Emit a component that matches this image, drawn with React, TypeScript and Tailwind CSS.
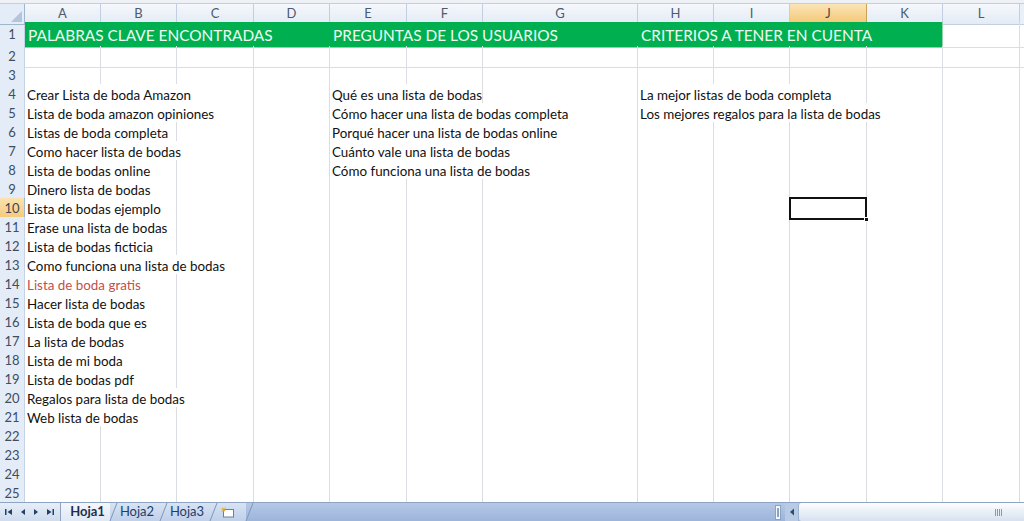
import React from "react";

const GRID =
  "grid grid-cols-[25px_76px_76px_77px_76px_77px_76px_155px_76px_76px_77px_76px_77px_1fr]";

const COLS = ["A", "B", "C", "D", "E", "F", "G", "H", "I", "J", "K", "L"];

type Seg = { span: number; text?: string; red?: boolean };

const SPAN: Record<number, string> = {
  1: "col-span-1",
  2: "col-span-2",
  3: "col-span-3",
  4: "col-span-4",
};

const colA: [string, number, boolean?][] = [
  ["Crear Lista de boda Amazon", 3],
  ["Lista de boda amazon opiniones", 3],
  ["Listas de boda completa", 2],
  ["Como hacer lista de bodas", 3],
  ["Lista de bodas online", 2],
  ["Dinero lista de bodas", 2],
  ["Lista de bodas ejemplo", 2],
  ["Erase una lista de bodas", 2],
  ["Lista de bodas ficticia", 2],
  ["Como funciona una lista de bodas", 3],
  ["Lista de boda gratis", 2, true],
  ["Hacer lista de bodas", 2],
  ["Lista de boda que es", 2],
  ["La lista de bodas", 2],
  ["Lista de mi boda", 2],
  ["Lista de bodas pdf", 2],
  ["Regalos para lista de bodas", 3],
  ["Web lista de bodas", 2],
];

const colE: [string, number][] = [
  ["Qué es una lista de bodas", 2],
  ["Cómo hacer una lista de bodas completa", 3],
  ["Porqué hacer una lista de bodas online", 3],
  ["Cuánto vale una lista de bodas", 3],
  ["Cómo funciona una lista de bodas", 3],
];

const colH: [string, number][] = [
  ["La mejor listas de boda completa", 3],
  ["Los mejores regalos para la lista de bodas", 4],
];

function buildRow(r: number): Seg[] {
  const segs: Seg[] = [];
  const i = r - 4;
  const a = colA[i];
  if (a) {
    segs.push({ span: a[1], text: a[0], red: a[2] });
    for (let k = a[1]; k < 4; k++) segs.push({ span: 1 });
  } else {
    for (let k = 0; k < 4; k++) segs.push({ span: 1 });
  }
  const e = colE[i];
  if (e) {
    segs.push({ span: e[1], text: e[0] });
    for (let k = e[1]; k < 3; k++) segs.push({ span: 1 });
  } else {
    for (let k = 0; k < 3; k++) segs.push({ span: 1 });
  }
  const h = colH[i];
  if (h) {
    segs.push({ span: h[1], text: h[0] });
    for (let k = h[1]; k < 5; k++) segs.push({ span: 1 });
  } else {
    for (let k = 0; k < 5; k++) segs.push({ span: 1 });
  }
  return segs;
}

const font = { fontFamily: "Lato, 'Liberation Sans', sans-serif" };

function RowHeader({ n, active }: { n: number; active?: boolean }) {
  return (
    <div
      className={
        active
          ? "flex items-center justify-center border-r border-b border-[#9eb6ce] bg-gradient-to-b from-[#fbe2b0] to-[#f5c977] pt-[1px] text-[13px] text-[#3d4756]"
          : "flex items-center justify-center border-r border-b border-[#c5d3e4] bg-[#e4ecf7] pt-[1px] text-[13px] text-[#3d4d62]"
      }
    >
      {n}
    </div>
  );
}

function DataRow({ r }: { r: number }) {
  const segs = buildRow(r);
  let col = 0;
  return (
    <div className={`${GRID} h-[19px]`}>
      <RowHeader n={r} active={r === 10} />
      {segs.map((s, idx) => {
        const start = col;
        col += s.span;
        const isSel = r === 10 && start === 9;
        return (
          <div
            key={idx}
            className={`${SPAN[s.span]} relative flex items-center border-r border-b border-[#dadde2] bg-white pt-[2px] pl-[2px] text-[13.4px] leading-none whitespace-nowrap ${
              s.red ? "text-[#c0504d]" : "text-[#111]"
            }`}
          >
            {s.text}
            {isSel && (
              <>
                <div className="absolute left-[-1px] top-[-1px] right-[-1px] bottom-[-1px] z-20 border-2 border-[#111]"></div>
                <div className="absolute right-[-3px] bottom-[-3px] z-30 h-[5px] w-[5px] border border-white bg-[#111]"></div>
              </>
            )}
          </div>
        );
      })}
      <div className="border-b border-[#dadde2] bg-white"></div>
    </div>
  );
}

function TabBar() {
  return (
    <div className="relative flex h-[19px] border-t border-[#8da4c4] bg-gradient-to-b from-[#b5c8e6] to-[#9db4da]">
      <div className="flex w-[60px] items-center gap-[7px] bg-gradient-to-b from-[#e6eef8] to-[#cfdcee] pl-[5px] text-[#24406a]">
        <svg width="8" height="8" viewBox="0 0 8 8">
          <rect x="0" y="1" width="1.5" height="6" fill="#24406a" />
          <path d="M7 1 L2.5 4 L7 7 Z" fill="#24406a" />
        </svg>
        <svg width="6" height="8" viewBox="0 0 6 8">
          <path d="M5 1 L1 4 L5 7 Z" fill="#24406a" />
        </svg>
        <svg width="6" height="8" viewBox="0 0 6 8">
          <path d="M1 1 L5 4 L1 7 Z" fill="#24406a" />
        </svg>
        <svg width="8" height="8" viewBox="0 0 8 8">
          <path d="M1 1 L5.5 4 L1 7 Z" fill="#24406a" />
          <rect x="6.5" y="1" width="1.5" height="6" fill="#24406a" />
        </svg>
      </div>
      <div className="relative flex items-stretch">
        <div className="relative z-10 flex w-[50px] items-center justify-center border-l border-[#8da4c4] bg-gradient-to-b from-[#f4f7fc] to-[#dfe8f5] pl-[4px] text-[13px] font-bold text-[#1c2f4d]">
          Hoja1
        </div>
        <div className="flex w-[50px] items-center justify-center bg-gradient-to-b from-[#d8e3f3] to-[#bfd0ea] pl-[4px] text-[13px] text-[#1f3c6a]">
          Hoja2
        </div>
        <div className="flex w-[50px] items-center justify-center bg-gradient-to-b from-[#d8e3f3] to-[#bfd0ea] pl-[4px] text-[13px] text-[#1f3c6a]">
          Hoja3
        </div>
        <div className="flex w-[36px] items-center justify-center bg-gradient-to-b from-[#d8e3f3] to-[#bfd0ea]">
          <svg width="14" height="11" viewBox="0 0 14 11">
            <rect x="2.5" y="2.5" width="10" height="7.5" fill="#fff" stroke="#6b7f9c" />
            <path d="M1 1 L4 4" stroke="#e0a92a" strokeWidth="1.5" />
            <path d="M4 0.5 L4 3 M0.5 4 L3 4" stroke="#e0a92a" strokeWidth="1" />
          </svg>
        </div>
        <svg className="absolute left-0 top-0 z-20" width="200" height="18" viewBox="0 0 200 18">
          <path d="M50 18 L57 0" stroke="#7f97ba" strokeWidth="1" fill="none" />
          <path d="M100 18 L107 0" stroke="#7f97ba" strokeWidth="1" fill="none" />
          <path d="M150 18 L157 0" stroke="#7f97ba" strokeWidth="1" fill="none" />
          <path d="M186 18 L193 0" stroke="#7f97ba" strokeWidth="1" fill="none" />
        </svg>
      </div>
      <div className="flex-1"></div>
      <div className="flex w-[25px] items-center">
        <div className="ml-[2px] flex h-[15px] w-[6px] items-center justify-center border border-[#8ca2c2] bg-[#f5f8fc]">
          <div className="h-[9px] w-[2px] border-x border-[#8ca2c2]"></div>
        </div>
        <div className="ml-[4px] flex h-[18px] w-[13px] items-center justify-center bg-[#b9cae4]">
          <svg width="6" height="8" viewBox="0 0 6 8">
            <path d="M5 0.5 L1 4 L5 7.5 Z" fill="#2f4a72" />
          </svg>
        </div>
      </div>
      <div className="flex w-[226px] items-center justify-end rounded-l-[3px] border-l border-[#9fb3d0] bg-gradient-to-b from-[#fdfeff] to-[#d6e1ef] pr-[22px]">
        <div className="flex gap-[1px]">
          <div className="h-[7px] w-[1px] bg-[#8798b0]"></div>
          <div className="h-[7px] w-[1px] bg-[#8798b0]"></div>
          <div className="h-[7px] w-[1px] bg-[#8798b0]"></div>
          <div className="h-[7px] w-[1px] bg-[#8798b0]"></div>
        </div>
      </div>
    </div>
  );
}

export default function App() {
  const rows = [];
  for (let r = 4; r <= 25; r++) rows.push(r);
  return (
    <div className="h-[521px] w-[1024px] overflow-hidden bg-white" style={font}>
      <div className="h-[4px] border-b border-[#c4cedb] bg-[#eef2f7]"></div>
      <div className={`${GRID} h-[18px]`}>
        <div className="relative border-r border-b border-[#9eb6ce] bg-[#e4ecf7]">
          <svg className="absolute right-[2px] bottom-[2px]" width="11" height="11" viewBox="0 0 11 11">
            <path d="M11 0 L11 11 L0 11 Z" fill="#b4c4da" />
          </svg>
        </div>
        {COLS.map((c) => (
          <div
            key={c}
            className={
              c === "J"
                ? "flex items-center justify-center border-r border-b border-[#c9a45c] bg-gradient-to-b from-[#fbe4b6] to-[#f4c672] text-[13px] text-[#4a4a4a]"
                : "flex items-center justify-center border-r border-b border-[#c3cfe0] bg-gradient-to-b from-[#f5f8fc] to-[#e4ebf5] text-[13px] text-[#4d5b6f]"
            }
          >
            {c}
          </div>
        ))}
        <div className="border-b border-[#c3cfe0] bg-[#eaf0f8]"></div>
      </div>
      <div className={`${GRID} h-[24px]`}>
        <RowHeader n={1} />
        <div className="col-span-4 flex items-center border-b border-[#8fd3a8] bg-[#00b050] pt-[2px] pl-[3px] text-[15.4px] whitespace-nowrap text-[#eefbf1]">
          PALABRAS CLAVE ENCONTRADAS
        </div>
        <div className="col-span-3 flex items-center border-b border-[#8fd3a8] bg-[#00b050] pt-[2px] pl-[3px] text-[15.4px] whitespace-nowrap text-[#eefbf1]">
          PREGUNTAS DE LOS USUARIOS
        </div>
        <div className="col-span-4 flex items-center border-r border-b border-[#8fd3a8] bg-[#00b050] pt-[2px] pl-[3px] text-[15.4px] whitespace-nowrap text-[#eefbf1]">
          CRITERIOS A TENER EN CUENTA
        </div>
        <div className="border-r border-b border-[#dadde2]"></div>
        <div className="border-b border-[#dadde2]"></div>
      </div>
      {[2, 3].map((r) => (
        <div key={r} className={`${GRID} h-[19px]`}>
          <RowHeader n={r} />
          {COLS.map((c) => (
            <div key={c} className="border-r border-b border-[#dadde2]"></div>
          ))}
          <div className="border-b border-[#dadde2]"></div>
        </div>
      ))}
      {rows.map((r) => (
        <DataRow key={r} r={r} />
      ))}
      <TabBar />
    </div>
  );
}
